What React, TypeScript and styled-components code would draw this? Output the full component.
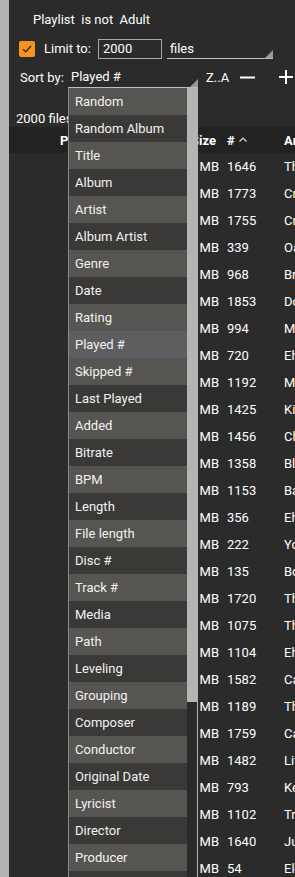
import styled, { createGlobalStyle } from 'styled-components';

const sortFields = [
	'Random',
	'Random Album',
	'Title',
	'Album',
	'Artist',
	'Album Artist',
	'Genre',
	'Date',
	'Rating',
	'Played #',
	'Skipped #',
	'Last Played',
	'Added',
	'Bitrate',
	'BPM',
	'Length',
	'File length',
	'Disc #',
	'Track #',
	'Media',
	'Path',
	'Leveling',
	'Grouping',
	'Composer',
	'Conductor',
	'Original Date',
	'Lyricist',
	'Director',
	'Producer',
	'Publisher',
];

const tracks = [
	{ size: '8.1 MB', plays: 1646, artist: 'The Beatles' },
	{ size: '9.4 MB', plays: 1773, artist: 'Cream' },
	{ size: '7.2 MB', plays: 1755, artist: 'Crowded House' },
	{ size: '6.8 MB', plays: 339, artist: 'Oasis' },
	{ size: '5.5 MB', plays: 968, artist: 'Bruce Springsteen' },
	{ size: '8.9 MB', plays: 1853, artist: 'Donovan' },
	{ size: '4.7 MB', plays: 994, artist: 'Madness' },
	{ size: '7.7 MB', plays: 720, artist: 'Ehud Banai' },
	{ size: '6.1 MB', plays: 1192, artist: 'Morrissey' },
	{ size: '9.0 MB', plays: 1425, artist: 'Kings of Leon' },
	{ size: '5.9 MB', plays: 1456, artist: 'Chicago' },
	{ size: '8.3 MB', plays: 1358, artist: 'Blondie' },
	{ size: '7.0 MB', plays: 1153, artist: 'Bad Company' },
	{ size: '6.6 MB', plays: 356, artist: 'Ehud Banai' },
	{ size: '5.2 MB', plays: 222, artist: 'Yo La Tengo' },
	{ size: '8.4 MB', plays: 135, artist: 'Bon Jovi' },
	{ size: '7.9 MB', plays: 1720, artist: 'The Kinks' },
	{ size: '6.3 MB', plays: 1075, artist: 'The Who' },
	{ size: '9.2 MB', plays: 1104, artist: 'Ehud Banai' },
	{ size: '5.1 MB', plays: 1582, artist: 'Cat Stevens' },
	{ size: '7.5 MB', plays: 1189, artist: 'The Doors' },
	{ size: '8.6 MB', plays: 1759, artist: 'Carly Simon' },
	{ size: '6.9 MB', plays: 1482, artist: 'Little Feat' },
	{ size: '4.9 MB', plays: 793, artist: 'Kenny Loggins' },
	{ size: '7.3 MB', plays: 1102, artist: 'Traffic' },
	{ size: '8.0 MB', plays: 1640, artist: 'Judas Priest' },
	{ size: '5.8 MB', plays: 54, artist: 'Electric Light Orchestra' },
];

function App() {
	return (
		<>
			<GlobalStyle />
			<Page>
				<SideStrip />
				<Main>
					<RuleRow>Playlist  is not  Adult</RuleRow>

					<LimitRow>
						<CheckBox>
							<svg width="10" height="8" viewBox="0 0 10 8">
								<path d="M1 4.2 L3.7 6.8 L9 1" fill="none" stroke="#3a2a10" strokeWidth="1.4" />
							</svg>
						</CheckBox>
						<Label>Limit to:</Label>
						<NumberBox>2000</NumberBox>
						<Select width={106}>files</Select>
					</LimitRow>

					<SortRow>
						<SortLabel>Sort by:</SortLabel>
						<Select width={130}>Played #</Select>
						<OrderText>Z..A</OrderText>
						<IconButton width={39}>
							<svg width="15" height="15" viewBox="0 0 15 15">
								<path d="M0 7.5 H15" stroke="#fff" strokeWidth="2" />
							</svg>
						</IconButton>
						<IconButton width={14}>
							<svg width="14" height="14" viewBox="0 0 14 14">
								<path d="M0 7 H14 M7 0 V14" stroke="#fff" strokeWidth="2" />
							</svg>
						</IconButton>
					</SortRow>

					<Count>2000 files</Count>

					<TableHead>
						<HeadCell indent={51}>Path</HeadCell>
						<HeadCell indent={41}>Size</HeadCell>
						<HeadCell indent={5}>
							#
							<Caret width="8" height="5" viewBox="0 0 8 5">
								<path d="M0.5 4.5 L4 1 L7.5 4.5" fill="none" stroke="#ddd" strokeWidth="1.2" />
							</Caret>
						</HeadCell>
						<HeadCell indent={5}>Artist</HeadCell>
					</TableHead>

					{tracks.map((track) => (
						<TableRow key={track.plays}>
							<Cell />
							<SizeCell>{track.size}</SizeCell>
							<Cell>{track.plays}</Cell>
							<Cell>{track.artist}</Cell>
						</TableRow>
					))}

					<DropList>
						<Options>
							{sortFields.map((field, i) => (
								<Option key={field} shade={field === 'Played #' ? 'selected' : i % 2 === 0 ? 'light' : 'dark'}>
									{field}
								</Option>
							))}
						</Options>
						<ScrollTrack>
							<ScrollThumb />
						</ScrollTrack>
					</DropList>
				</Main>
			</Page>
		</>
	);
}

const GlobalStyle = createGlobalStyle`
	html, body {
		margin: 0;
		height: 100%;
		overflow: hidden;
		background: #2b2b2b;
	}
	body {
		font-family: Roboto, 'Liberation Sans', sans-serif;
		font-size: 13px;
		color: #fff;
	}
`;

const Page = styled.div`
	display: flex;
	height: 877px;
	overflow: hidden;
`;

const SideStrip = styled.div`
	width: 9px;
	flex-shrink: 0;
	background: #b4b4b4;
`;

const Main = styled.div`
	position: relative;
	flex: 1;
	background: #2b2b2b;
	overflow: hidden;
`;

const RuleRow = styled.div`
	height: 38px;
	display: flex;
	align-items: center;
	padding-left: 24px;
	white-space: pre;
`;

const LimitRow = styled.div`
	height: 21px;
	display: flex;
	align-items: center;
	padding-left: 10px;

	& > * {
		flex-shrink: 0;
	}
`;

const CheckBox = styled.div`
	width: 16px;
	height: 16px;
	border-radius: 2px;
	background: #f7931e;
	display: flex;
	align-items: center;
	justify-content: center;
`;

const Label = styled.span`
	margin-left: 9px;
	width: 54px;
`;

const NumberBox = styled.div`
	box-sizing: border-box;
	width: 64px;
	height: 20px;
	border: 1px solid #a9a9a9;
	padding-left: 4px;
	display: flex;
	align-items: center;
`;

const Select = styled.div<{ width: number }>`
	position: relative;
	box-sizing: border-box;
	width: ${({ width }) => width}px;
	height: 20px;
	margin-left: 5px;
	padding-left: 3px;
	display: flex;
	align-items: center;
	border-bottom: 1px solid #bdbdbd;

	&::after {
		content: '';
		position: absolute;
		right: 0;
		bottom: 0;
		border-style: solid;
		border-width: 0 0 8px 8px;
		border-color: transparent transparent #9a9a9a transparent;
	}
`;

const SortRow = styled.div`
	height: 22px;
	margin-top: 7px;
	display: flex;
	align-items: center;
	padding-left: 11px;

	& > * {
		flex-shrink: 0;
	}

	${Select} {
		margin-left: 0;
		height: 22px;
	}
`;

const SortLabel = styled.span`
	width: 48px;
`;

const OrderText = styled.span`
	margin-left: 8px;
	width: 34px;
`;

const IconButton = styled.span<{ width: number }>`
	display: flex;
	align-items: center;
	width: ${({ width }) => width}px;
`;

const Count = styled.div`
	margin-top: 22px;
	height: 17px;
	line-height: 17px;
	padding-left: 7px;
`;

const columns = '141px 72px 57px 1fr';

const TableHead = styled.div`
	display: grid;
	grid-template-columns: ${columns};
	height: 26px;
	align-items: center;
	background: #222;
	font-weight: bold;
`;

const HeadCell = styled.div<{ indent: number }>`
	display: flex;
	align-items: center;
	padding-left: ${({ indent }) => indent}px;
	white-space: nowrap;
	overflow: hidden;
`;

const Caret = styled.svg`
	margin-left: 4px;
	margin-bottom: 2px;
`;

const TableRow = styled.div`
	display: grid;
	grid-template-columns: ${columns};
	height: 27px;
	align-items: center;
`;

const Cell = styled.div`
	padding-left: 5px;
	white-space: nowrap;
	overflow: hidden;
`;

const SizeCell = styled.div`
	text-align: right;
	padding-right: 3px;
	white-space: nowrap;
`;

const DropList = styled.div`
	position: absolute;
	top: 88px;
	left: 59px;
	width: 130px;
	bottom: 0;
	box-sizing: border-box;
	border-left: 1px solid #8a8a8a;
	border-right: 1px solid #b4b4b4;
	display: flex;
	background: #2b2b2b;
`;

const Options = styled.div`
	flex: 1;
	overflow: hidden;
`;

const shades = {
	light: '#575551',
	dark: '#3a3937',
	selected: '#5e5e60',
};

const Option = styled.div<{ shade: keyof typeof shades }>`
	height: 27px;
	line-height: 27px;
	padding-left: 6px;
	background: ${({ shade }) => shades[shade]};
	color: #f2f2f2;
	white-space: nowrap;
`;

const ScrollTrack = styled.div`
	width: 10px;
	background: #2a2a2a;
`;

const ScrollThumb = styled.div`
	height: 614px;
	background: #b4b4b4;
`;

export default App;
